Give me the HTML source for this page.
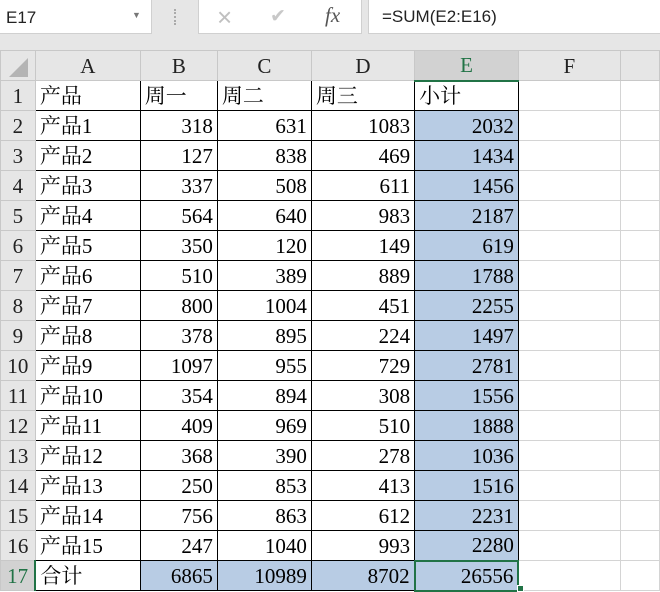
<!DOCTYPE html>
<html><head><meta charset="utf-8"><style>
*{margin:0;padding:0;box-sizing:border-box}
body{width:660px;height:590px;overflow:hidden;background:#fff;font-family:"Liberation Serif","Noto Serif CJK SC",serif;position:relative}
#bar{position:absolute;left:0;top:0;width:660px;height:50px;background:#e6e6e6}
.nb{position:absolute;left:0;top:0;width:152px;height:34px;background:#fff;border-right:1px solid #d0d0d0;border-bottom:1px solid #d0d0d0;font:17px "Liberation Sans",sans-serif;padding:8px 0 0 6px;color:#222}
.fx{position:absolute;left:198px;top:0;width:164px;height:34px;background:#fff;border:1px solid #d0d0d0;border-top:0}
.fm{position:absolute;left:368px;top:0;width:292px;height:34px;background:#fff;border:1px solid #d0d0d0;border-top:0;border-right:0;font:17px "Liberation Sans",sans-serif;padding:7px 0 0 13px;color:#222}
table{position:absolute;left:0;top:50px;border-collapse:collapse;table-layout:fixed}
td{height:30px;font-size:21px;padding:0 4px;border:1px solid #d4d4d4;white-space:nowrap;overflow:hidden;line-height:28px}
td.h{background:#e6e6e6;text-align:center;border-color:#c8c8c8;color:#222;padding:0}
td.r{text-align:right}
.d{border:1px solid #000}
.s{background:#b8cce4}
</style></head><body>
<div id="bar">
<div class="nb">E17<span style="position:absolute;left:132px;top:10px;font-size:9px;color:#777">▼</span></div>
<div style="position:absolute;left:174px;top:9px;width:2px;height:16px;border-left:2px dotted #aaa"></div>
<div class="fx">
<span style="position:absolute;left:18px;top:2px;font:26px 'Liberation Sans';color:#c0c0c0">×</span>
<span style="position:absolute;left:71px;top:5px;font:19px 'DejaVu Sans';color:#c8c8c8">✔</span>
<span style="position:absolute;left:126px;top:3px;font:italic 21px 'Liberation Serif';color:#555">fx</span>
</div>
<div class="fm">=SUM(E2:E16)</div>
</div>
<table>
<colgroup><col style="width:35px"><col style="width:106px"><col style="width:78px"><col style="width:95px"><col style="width:105px"><col style="width:105px"><col style="width:105px"><col style="width:40px"></colgroup>
<tr><td class="h" style="background:#e6e6e6"><svg width="30" height="28" style="display:block"><polygon points="27,6 27,25 8,25" fill="#b4b4b4"/></svg></td><td class="h">A</td><td class="h">B</td><td class="h">C</td><td class="h">D</td><td class="h" style="background:#d2d2d2;color:#217346;border-bottom:2px solid #217346">E</td><td class="h">F</td><td class="h"></td></tr>
<tr><td class="h">1</td><td class="d">产品</td><td class="d">周一</td><td class="d">周二</td><td class="d">周三</td><td class="d">小计</td><td></td><td></td></tr>
<tr><td class="h">2</td><td class="d">产品1</td><td class="d r">318</td><td class="d r">631</td><td class="d r">1083</td><td class="d r s">2032</td><td></td><td></td></tr>
<tr><td class="h">3</td><td class="d">产品2</td><td class="d r">127</td><td class="d r">838</td><td class="d r">469</td><td class="d r s">1434</td><td></td><td></td></tr>
<tr><td class="h">4</td><td class="d">产品3</td><td class="d r">337</td><td class="d r">508</td><td class="d r">611</td><td class="d r s">1456</td><td></td><td></td></tr>
<tr><td class="h">5</td><td class="d">产品4</td><td class="d r">564</td><td class="d r">640</td><td class="d r">983</td><td class="d r s">2187</td><td></td><td></td></tr>
<tr><td class="h">6</td><td class="d">产品5</td><td class="d r">350</td><td class="d r">120</td><td class="d r">149</td><td class="d r s">619</td><td></td><td></td></tr>
<tr><td class="h">7</td><td class="d">产品6</td><td class="d r">510</td><td class="d r">389</td><td class="d r">889</td><td class="d r s">1788</td><td></td><td></td></tr>
<tr><td class="h">8</td><td class="d">产品7</td><td class="d r">800</td><td class="d r">1004</td><td class="d r">451</td><td class="d r s">2255</td><td></td><td></td></tr>
<tr><td class="h">9</td><td class="d">产品8</td><td class="d r">378</td><td class="d r">895</td><td class="d r">224</td><td class="d r s">1497</td><td></td><td></td></tr>
<tr><td class="h">10</td><td class="d">产品9</td><td class="d r">1097</td><td class="d r">955</td><td class="d r">729</td><td class="d r s">2781</td><td></td><td></td></tr>
<tr><td class="h">11</td><td class="d">产品10</td><td class="d r">354</td><td class="d r">894</td><td class="d r">308</td><td class="d r s">1556</td><td></td><td></td></tr>
<tr><td class="h">12</td><td class="d">产品11</td><td class="d r">409</td><td class="d r">969</td><td class="d r">510</td><td class="d r s">1888</td><td></td><td></td></tr>
<tr><td class="h">13</td><td class="d">产品12</td><td class="d r">368</td><td class="d r">390</td><td class="d r">278</td><td class="d r s">1036</td><td></td><td></td></tr>
<tr><td class="h">14</td><td class="d">产品13</td><td class="d r">250</td><td class="d r">853</td><td class="d r">413</td><td class="d r s">1516</td><td></td><td></td></tr>
<tr><td class="h">15</td><td class="d">产品14</td><td class="d r">756</td><td class="d r">863</td><td class="d r">612</td><td class="d r s">2231</td><td></td><td></td></tr>
<tr><td class="h">16</td><td class="d">产品15</td><td class="d r">247</td><td class="d r">1040</td><td class="d r">993</td><td class="d r s">2280</td><td></td><td></td></tr>
<tr><td class="h" style="background:#d2d2d2;color:#217346;border-right:2px solid #217346">17</td><td class="d">合计</td><td class="d r s">6865</td><td class="d r s">10989</td><td class="d r s">8702</td><td class="d r s" style="border:2px solid #217346">26556</td><td></td><td></td></tr>
</table>
<div style="position:absolute;left:517px;top:585px;width:7px;height:7px;background:#217346;border:1px solid #fff"></div>
</body></html>
